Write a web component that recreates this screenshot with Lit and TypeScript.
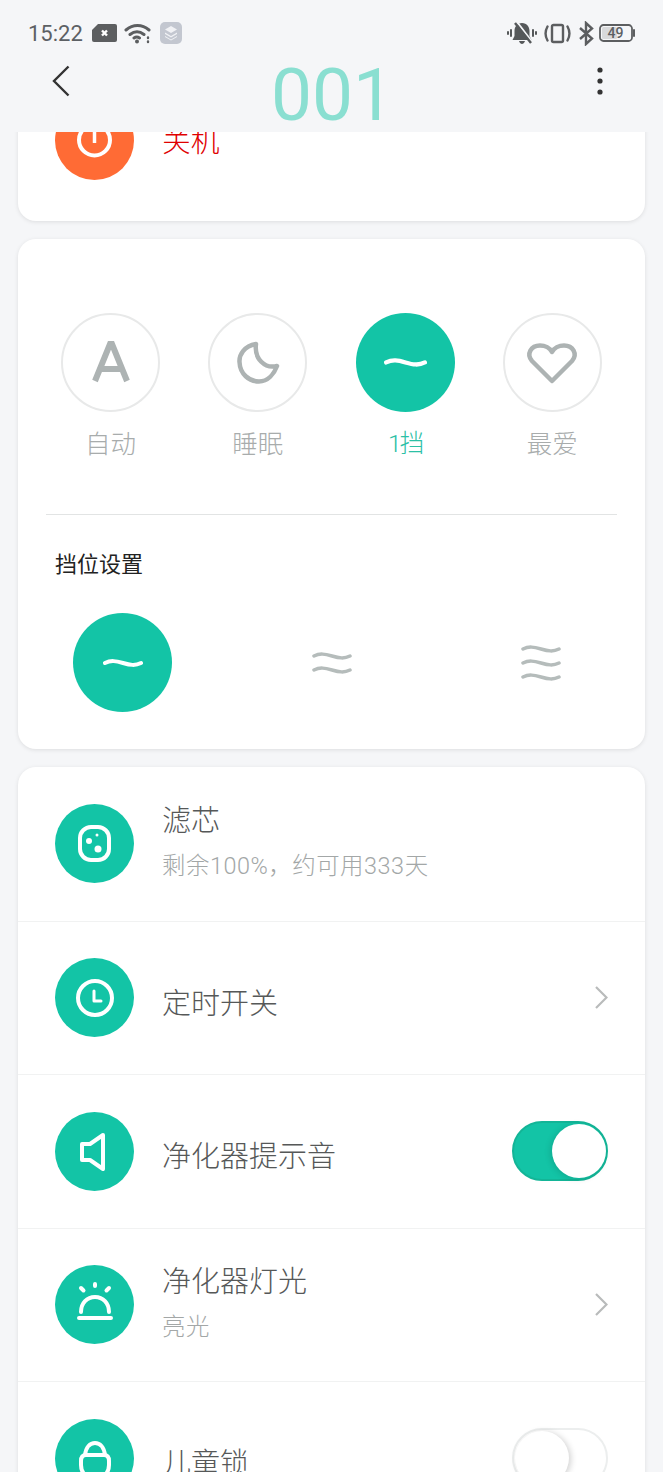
import { LitElement, html, css, svg } from 'lit';
import { customElement } from 'lit/decorators.js';

const wave = (y: number) => svg`<path d="M2 ${y} C8 ${y - 3} 13 ${y - 2} 20 ${y} S32 ${y + 3} 38 ${y}" />`;

const waves = (ys: number[], width: number, height: number) => html`
  <svg class="wave" width=${width} height=${height} viewBox="0 0 40 ${height * 40 / width}">
    ${ys.map(wave)}
  </svg>
`;

const rowIcons: Record<string, unknown> = {
  filter: svg`
    <rect x="25" y="23" width="29" height="33" rx="11" />
    <circle class="f" cx="34" cy="37" r="3" />
    <circle class="f" cx="43" cy="45" r="3.5" />
    <circle class="f" cx="42" cy="31" r="1.5" />`,
  clock: svg`
    <circle cx="40" cy="40" r="17" />
    <path stroke-width="3" d="M39 33V43H46" />`,
  sound: svg`<path d="M48 23L35 32H27V48H35L48 57Z" />`,
  light: svg`
    <path d="M26 47C26 38 32 32 40 32S54 38 54 47" />
    <path d="M24 53H56M40 19V21M26 23L28.500 25.500M54 23L51.500 25.500" />`,
  lock: svg`
    <path d="M30 36C31 28 35 24 40 24S49 28 50 36" />
    <path d="M26 42C26 38 28 36 31 36H49C52 36 54 38 54 42V46C54 54 48 60 40 60S26 54 26 46Z" />`,
};

const chevron = html`
  <svg class="chevron" width="14" height="25" viewBox="0 0 14 25">
    <path d="M2 2L12.5 12.5L2 23" />
  </svg>
`;

const rows = [
  { icon: 'filter', title: '滤芯', sub: '剩余100%\uFF0C约可用333天' },
  { icon: 'clock', title: '定时开关', end: 'chevron' },
  { icon: 'sound', title: '净化器提示音', end: 'on' },
  { icon: 'light', title: '净化器灯光', sub: '亮光', end: 'chevron' },
  { icon: 'lock', title: '儿童锁', end: 'off' },
];

@customElement('app-root')
export class AppRoot extends LitElement {
  static styles = css`
    :host {
      display: block;
      height: 1472px;
      overflow: hidden;
      background: #f5f6f8;
      font-family: Roboto, 'Noto Sans CJK SC', sans-serif;
      font-weight: 300;
    }
    .status {
      display: flex;
      justify-content: space-between;
      align-items: center;
      height: 24px;
      padding: 21px 27px 0 28px;
    }
    .status-group {
      display: flex;
      align-items: center;
    }
    .time {
      font-size: 22px;
      font-weight: 400;
      color: #5c6064;
      margin-right: 9px;
    }
    .battery {
      position: relative;
      width: 37px;
      height: 18px;
    }
    .battery span {
      position: absolute;
      left: 0;
      width: 33px;
      top: 0;
      text-align: center;
      font-size: 14px;
      line-height: 18px;
      font-weight: 500;
      color: #5c6064;
    }
    .nav {
      display: flex;
      justify-content: space-between;
      align-items: center;
      height: 87px;
      padding: 0 58px 0 52px;
    }
    .title {
      font-size: 73px;
      line-height: 87px;
      color: #8adfd1;
      font-weight: 400;
      position: relative;
      top: 7px;
    }
    .back {
      margin-top: -16px;
    }
    .more {
      margin-top: -16px;
    }
    .scroll {
      height: 1340px;
      overflow: hidden;
    }
    .cards {
      display: flex;
      flex-direction: column;
      gap: 18px;
      margin: -60px 18px 0;
    }
    .card {
      background: #fff;
      border-radius: 18px;
      box-shadow: 0 1px 4px rgba(0, 0, 0, 0.1);
    }
    .power {
      display: flex;
      align-items: center;
      gap: 28px;
      padding: 29px 37px 41px;
    }
    .power-label {
      font-size: 28.8px;
      line-height: 40px;
      color: #e00000;
      padding-top: 3px;
    }
    .modes {
      padding-top: 74px;
      padding-bottom: 37px;
    }
    .mode-grid {
      display: grid;
      grid-template-columns: repeat(4, 1fr);
      padding: 0 19px;
      justify-items: center;
    }
    .level-grid {
      display: grid;
      grid-template-columns: repeat(3, 1fr);
      justify-items: center;
      align-items: center;
      height: 99px;
    }
    .mode {
      display: flex;
      flex-direction: column;
      align-items: center;
    }
    .disc {
      width: 99px;
      height: 99px;
      box-sizing: border-box;
      border-radius: 50%;
      display: flex;
      align-items: center;
      justify-content: center;
      border: 2px solid #e8e9e9;
    }
    .disc.active {
      background: #13c4a6;
      border: none;
    }
    .mode-label {
      margin-top: 15px;
      font-size: 25.5px;
      line-height: 34px;
      color: #a8acac;
    }
    .mode-label.active {
      color: #2cc0a6;
      font-size: 24.5px;
      letter-spacing: -2px;
    }
    .divider {
      height: 1px;
      background: #e2e4e4;
      margin: 53px 28px 0;
    }
    .level-title {
      font-size: 22px;
      line-height: 30px;
      color: #222;
      font-weight: 400;
      margin: 35px 37px 33px;
    }
    .wave {
      fill: none;
      stroke: #b5bcbb;
      stroke-width: 3.5;
      stroke-linecap: round;
    }
    .active .wave {
      stroke: #fff;
      stroke-width: 4;
    }
    .glyph {
      fill: none;
      stroke: #adb3b3;
      stroke-width: 4.5;
      stroke-linejoin: round;
      stroke-linecap: round;
    }
    .row {
      display: flex;
      align-items: center;
      height: 153.5px;
      box-sizing: border-box;
      padding: 0 37px;
      gap: 28px;
      border-top: 1px solid #f1f2f2;
    }
    .row:first-child {
      border-top: none;
    }
    .row-icon {
      flex: none;
      width: 79px;
      height: 79px;
      fill: none;
      stroke: #fff;
      stroke-width: 4;
      stroke-linejoin: round;
      stroke-linecap: round;
    }
    .row-icon .bg {
      fill: #13c4a6;
      stroke: none;
    }
    .row-icon .f {
      fill: #fff;
      stroke: none;
    }
    .power .row-icon .bg {
      fill: #ff6b35;
    }
    .text {
      flex: 1;
      margin-top: -4px;
    }
    .text.single {
      margin-top: 0;
      padding-top: 12px;
    }
    .row-title {
      font-size: 29px;
      line-height: 40px;
      color: #565858;
    }
    .row-sub {
      font-size: 23.4px;
      line-height: 34px;
      margin-top: 8px;
      color: #a3a7a7;
      letter-spacing: 0.55px;
    }
    .chevron {
      fill: none;
      stroke: #b9bbbb;
      stroke-width: 2.2;
    }
    .toggle {
      position: relative;
      flex: none;
      width: 96px;
      height: 60px;
      box-sizing: border-box;
      border-radius: 30px;
      border: 2px solid #eceeee;
      background: #fff;
    }
    .toggle.on {
      background: #13c4a6;
      border-color: #13b597;
    }
    .knob {
      position: absolute;
      top: 1px;
      left: 1px;
      width: 54px;
      height: 54px;
      border-radius: 50%;
      background: #fff;
      box-shadow: 2px 1px 6px rgba(0, 0, 0, 0.18);
    }
    .toggle.on .knob {
      left: auto;
      right: 0;
      top: 1px;
      box-shadow: -2px 1px 6px rgba(0, 0, 0, 0.12);
    }
  `;

  renderStatus() {
    return html`
      <div class="status">
        <div class="status-group">
          <span class="time">15:22</span>
          <svg width="25" height="18" viewBox="0 0 25 18" style="margin-right:7px">
            <path fill="#5c5e60" d="M6 0H23A2 2 0 0 1 25 2V16A2 2 0 0 1 23 18H2A2 2 0 0 1 0 16V6Z" />
            <path stroke="#fff" stroke-width="2.400" d="M10 6.500L15 11.500M15 6.500L10 11.500" />
          </svg>
          <svg width="28" height="21" viewBox="0 0 28 21" fill="none" stroke="#5c5e60" stroke-width="3" stroke-linecap="round" style="margin-right:8px">
            <path d="M2 7C9 1 18 1 25 7M6 11.500C10.500 8 15.500 8 20 11.500M10 15C11.500 14 14 14 15.500 15" />
            <circle cx="13" cy="18.500" r="2" fill="#5c5e60" stroke="none" />
            <path stroke-width="2.400" d="M24 14.500V15M24 18.500V19" />
          </svg>
          <svg width="22" height="22" viewBox="0 0 22 22">
            <rect width="22" height="22" rx="5" fill="#c3c7d0" />
            <path fill="#f1f2f5" d="M11 4L17 7.500L11 11L5 7.500Z" />
            <path fill="#f1f2f5" d="M5 10.500L11 14L17 10.500V12L11 15.500L5 12Z" />
            <path fill="#f1f2f5" d="M5 14L11 17.500L17 14V15L11 18.500L5 15Z" />
          </svg>
        </div>
        <div class="status-group">
          <svg width="30" height="22" viewBox="0 0 30 22" style="margin-right:7px">
            <path fill="#55585a" d="M15 1C20 1 22.500 5 22.500 9V14L24.500 18H5.500L7.500 14V9C7.500 5 10 1 15 1ZM12 19H18C17.500 21 16 22 15 22S12.500 21 12 19Z" />
            <path stroke="#f5f6f8" stroke-width="2" d="M10 0L26 21" />
            <path stroke="#55585a" stroke-width="2.400" d="M8 1L24 21" />
            <path stroke="#55585a" stroke-width="2" stroke-linecap="round" d="M1 10V12M4 8V14M26 8V14M29 10V12" />
          </svg>
          <svg width="27" height="21" viewBox="0 0 27 21" fill="none" stroke="#5c5e60" stroke-width="2.400" style="margin-right:7px">
            <rect x="8" y="2" width="11" height="17" rx="1.500" />
            <path stroke-linecap="round" d="M3.500 3.500C1 8 1 13 3.500 17.500M23.500 3.500C26 8 26 13 23.500 17.500" />
          </svg>
          <svg width="16" height="25" viewBox="0 0 16 25" fill="none" stroke="#5c5e60" stroke-width="2.400" style="margin-right:5px">
            <path d="M2 7L14 17.500L8 23V2L14 7.500L2 18" />
          </svg>
          <div class="battery">
            <svg width="37" height="18" viewBox="0 0 37 18">
              <rect x="1" y="1" width="32" height="16" rx="3.500" fill="none" stroke="#5c5e60" stroke-width="1.800" />
              <rect x="3" y="3" width="15" height="12" rx="1.500" fill="#d8d9db" />
              <path d="M35 6V12" stroke="#5c5e60" stroke-width="2" stroke-linecap="round" />
            </svg>
            <span>49</span>
          </div>
        </div>
      </div>
    `;
  }

  renderEnd(end?: string) {
    if (end === 'chevron') return chevron;
    if (end === 'on' || end === 'off') {
      return html`<div class="toggle ${end}"><div class="knob"></div></div>`;
    }
    return null;
  }

  render() {
    const modes = [
      { label: '自动', glyph: svg`<path stroke-width="6" stroke-linejoin="miter" stroke-linecap="butt" d="M19 45L34 8H36L51 45M25 33H45" />` },
      { label: '睡眠', glyph: svg`<path d="M33 8C21 10 16 19 16.500 26C17 38 26 45.500 36 45.500C45 45.500 51 38 54 30C42 33 31 23 33 8Z" />` },
      { label: '1挡', active: true },
      { label: '最爱', glyph: svg`<path d="M35 45L15 25C9 18 14 9.500 23 9.500C28 9.500 33 12 35 16C37 12 42 9.500 47 9.500C56 9.500 61 18 55 25Z" />` },
    ];

    return html`
      ${this.renderStatus()}
      <div class="nav">
        <svg class="back" width="18" height="32" viewBox="0 0 18 32" fill="none" stroke="#333" stroke-width="2.400">
          <path d="M16.500 1.500L2 16L16.500 30.500" />
        </svg>
        <div class="title">001</div>
        <svg class="more" width="10" height="32" viewBox="0 0 10 32" fill="#333">
          <circle cx="5" cy="5" r="2.600" />
          <circle cx="5" cy="16" r="2.600" />
          <circle cx="5" cy="27" r="2.600" />
        </svg>
      </div>
      <div class="scroll">
        <div class="cards">
          <div class="card power">
            <svg class="row-icon" viewBox="0 0 79 79">
              <circle class="bg" cx="39.500" cy="39.500" r="39.500" />
              <circle cx="39.500" cy="39" r="15.500" />
              <path stroke-width="3.500" stroke-linecap="butt" d="M39.500 25V42" />
            </svg>
            <div class="power-label">关机</div>
          </div>

          <div class="card modes">
            <div class="mode-grid">
              ${modes.map(
                (m) => html`
                  <div class="mode">
                    <div class="disc ${m.active ? 'active' : ''}">
                      ${m.active
                        ? waves([6], 43, 13)
                        : html`<svg class="glyph" width="70" height="54" viewBox="0 0 70 54">${m.glyph}</svg>`}
                    </div>
                    <div class="mode-label ${m.active ? 'active' : ''}">${m.label}</div>
                  </div>
                `
              )}
            </div>
            <div class="divider"></div>
            <div class="level-title">挡位设置</div>
            <div class="level-grid">
              <div class="disc active">${waves([6], 40, 12)}</div>
              ${waves([5, 19], 40, 24)}
              ${waves([5, 19, 33], 40, 38)}
            </div>
          </div>

          <div class="card">
            ${rows.map(
              (r) => html`
                <div class="row">
                  <svg class="row-icon" viewBox="0 0 79 79">
                    <circle class="bg" cx="39.500" cy="39.500" r="39.500" />
                    ${rowIcons[r.icon]}
                  </svg>
                  <div class="text ${r.sub ? '' : 'single'}">
                    <div class="row-title">${r.title}</div>
                    ${r.sub ? html`<div class="row-sub">${r.sub}</div>` : null}
                  </div>
                  ${this.renderEnd(r.end)}
                </div>
              `
            )}
          </div>
        </div>
      </div>
    `;
  }
}
